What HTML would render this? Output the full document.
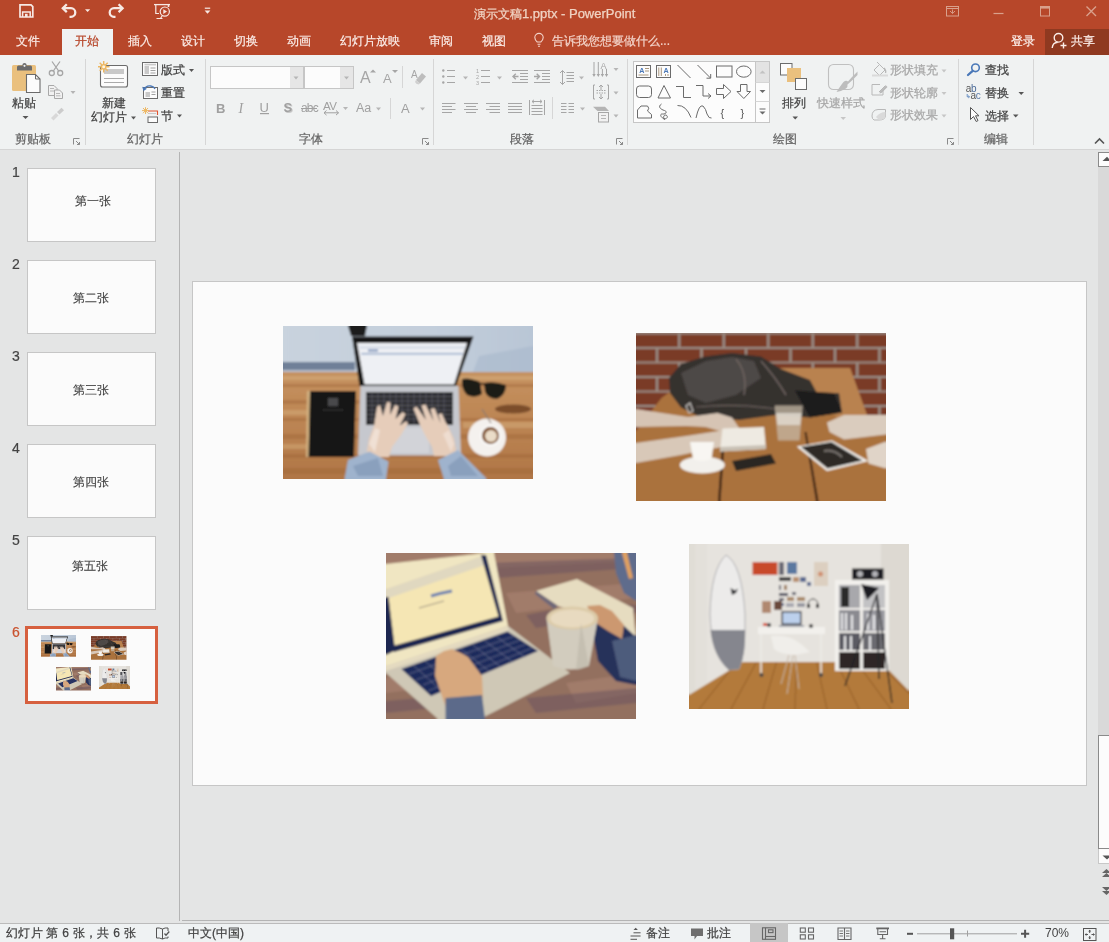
<!DOCTYPE html>
<html><head><meta charset="utf-8">
<style>
*{margin:0;padding:0;box-sizing:border-box}
html,body{width:1109px;height:942px;overflow:hidden}
body{position:relative;background:#E4E5E5;font-family:"Liberation Sans",sans-serif;font-size:12px;color:#444}
.a{position:absolute}
.t{position:absolute;white-space:nowrap;line-height:12px;font-size:12px;-webkit-text-stroke:0.25px currentColor}
.tab{-webkit-text-stroke:0.2px currentColor}
#title{left:0;top:0;width:1109px;height:55px;background:#B7472A}
.tab{color:#FBEDE8}
#ribbon{left:0;top:55px;width:1109px;height:94px;background:#F0F2F2}
#rbb{left:0;top:149px;width:1109px;height:1px;background:#D5D5D5}
.gl{color:#666}
.sep{position:absolute;width:1px;background:#D9D9D9}
.dd{position:absolute;width:0;height:0;border-left:3px solid transparent;border-right:3px solid transparent;border-top:3px solid #777}
.ddg{border-top-color:#B0B0B0}
.thumb{position:absolute;left:27px;width:129px;height:74px;background:#FBFBFB;border:1px solid #C6C6C6}
.tnum{position:absolute;left:12px;font-size:14px;line-height:14px;color:#444;-webkit-text-stroke:0.2px currentColor}
.ttx{position:absolute;left:0;width:127px;text-align:center;top:27px;font-size:12px;line-height:14px;color:#444;-webkit-text-stroke:0.15px currentColor}
#status{left:0;top:923px;width:1109px;height:19px;background:#EFF2F3;border-top:1px solid #BBBBBB}
</style></head><body style="will-change:transform">
<svg width="0" height="0" style="position:absolute">
<defs>
<filter id="soft" x="0" y="0" width="100%" height="100%"><feGaussianBlur stdDeviation="0.9"/><feComponentTransfer><feFuncA type="discrete" tableValues="1 1"/></feComponentTransfer></filter>
<filter id="soft2" x="-5%" y="-5%" width="110%" height="110%"><feGaussianBlur stdDeviation="1.6"/></filter>
<linearGradient id="wood1" x1="0" y1="0" x2="0" y2="1">
 <stop offset="0" stop-color="#CC9E6C"/><stop offset="0.5" stop-color="#C08A58"/><stop offset="1" stop-color="#B07646"/>
</linearGradient>
<linearGradient id="wall1" x1="0" y1="0" x2="1" y2="0">
 <stop offset="0" stop-color="#C9D3DE"/><stop offset="0.6" stop-color="#C3CEDB"/><stop offset="1" stop-color="#B9C6D6"/>
</linearGradient>

<symbol id="p1" viewBox="0 0 250 153">
<g filter="url(#soft)">
 <rect width="250" height="153" fill="url(#wood1)"/>
 <g opacity=".4" fill="#9C6236">
  <rect x="0" y="58" width="250" height="3"/><rect x="0" y="74" width="120" height="4"/>
  <rect x="0" y="92" width="250" height="3"/><rect x="0" y="108" width="250" height="5"/>
  <rect x="0" y="128" width="250" height="4"/><rect x="0" y="142" width="250" height="6"/>
 </g>
 <g opacity=".35" fill="#E2C08E">
  <rect x="0" y="50" width="250" height="4"/><rect x="0" y="84" width="60" height="5"/><rect x="180" y="96" width="70" height="6"/><rect x="0" y="118" width="40" height="5"/>
 </g>
 <rect width="250" height="46" fill="url(#wall1)"/>
 <rect x="0" y="36" width="72" height="10" fill="#6F8098"/>
 <rect x="0" y="44" width="72" height="2" fill="#B8C0CC"/>
 <path d="M196,30 L250,20 V46 H190 Z" fill="#ABBACD" opacity=".7"/>
 <!-- black object top -->
 <path d="M65,0 H84 L82,10 H68 Z" fill="#1C1C1E"/>
 <!-- dark shadow spot right -->
 <ellipse cx="230" cy="83" rx="18" ry="4.5" fill="#6A3E20" opacity=".8"/>
 <!-- notebook -->
 <path d="M26,65 H73 L71,131 H24 Z" fill="#121212"/>
 <path d="M24,65 H27 L25.5,131 H23 Z" fill="#D2B080"/>
 <path d="M45,72 H55 V80 H45 Z" fill="#4A4A4C"/>
 <path d="M40,84 H60" stroke="#555" stroke-width="0.8"/>
 <!-- laptop base -->
 <path d="M77.5,60 H175.5 L178,129.5 H75 Z" fill="#C6C8CE"/>
 <!-- keyboard -->
 <rect x="83" y="66" width="87" height="33" fill="#2A2A2E"/>
 <g stroke="#8A8A90" stroke-width="0.6" opacity=".8">
  <path d="M83,70.5 H170 M83,75 H170 M83,79.5 H170 M83,84 H170 M83,88.5 H170 M83,93 H170"/>
  <path d="M89,66 V99 M95,66 V99 M101,66 V99 M107,66 V99 M113,66 V99 M119,66 V99 M125,66 V99 M131,66 V99 M137,66 V99 M143,66 V99 M149,66 V99 M155,66 V99 M161,66 V99"/>
 </g>
 <rect x="108" y="102" width="38" height="25" fill="#D2D3D8"/>
 <!-- screen -->
 <path d="M69,10.5 H190.5 L173,60 H76.5 Z" fill="#161616"/>
 <path d="M74,17 H184 L171,58.5 H81.5 Z" fill="#EEF0F4"/>
 <path d="M76,20 H183 L182,23 H77 Z" fill="#DADFE8"/>
 <path d="M78,27 H180 L179.5,28.5 H78.5 Z" fill="#93A8C8"/>
 <rect x="85" y="23.5" width="10" height="2" fill="#7890B8"/>
 <!-- sunglasses -->
 <path d="M179,53 Q186,51 197,56 L199,68 Q192,73 184,69 Q178,63 179,53 Z" fill="#1F1A18"/>
 <path d="M201,57 Q212,55 223,59 Q223,69 214,73 Q205,73 202,66 Z" fill="#1F1A18"/>
 <path d="M197,58 Q199,57 202,58.5" stroke="#1F1A18" stroke-width="1.5" fill="none"/>
 <!-- hands -->
 <path d="M83,131 L86,113 L91,100 L94,81 L97,79 L100,90 L104,76 L107.5,76.5 L107,89 L112,79 L115.5,80.5 L112.5,93 L119.5,86 L122.5,88 L116.5,100 L123,95 L125,97.5 L118,109 L109,121 L106,131 Z" fill="#E6CDBA"/>
 <path d="M174,130 L171,113 L165,100 L162.5,96 L158.5,87 L155.5,88.5 L157.5,97 L151.5,82 L147.5,83 L150.5,95 L142.5,78.5 L138.5,79.5 L143,94 L133.5,80.5 L130.5,82.5 L137.5,100 L142,109 L149,121 L151,130 Z" fill="#E6CDBA"/>
 <path d="M86,118 L92,102 L97,104 L92,126 Z" fill="#F4E8E0" opacity=".7"/>
 <path d="M166,104 L171,118 L168,126 L160,108 Z" fill="#F4E8E0" opacity=".6"/>
 <!-- sleeves -->
 <path d="M61.5,153 L65,134 L86.5,125.5 L105.5,135.5 L103,153 Z" fill="#9FB3CD"/>
 <path d="M155,134 L175,124 L204,153 H161 Z" fill="#9FB3CD"/>
 <path d="M70,140 L95,132 L100,150 L75,150 Z" fill="#7D93B2" opacity=".6"/>
 <path d="M165,140 L178,130 L195,150 L168,150 Z" fill="#7D93B2" opacity=".6"/>
 <!-- saucer/cup -->
 <circle cx="204" cy="111.5" r="19" fill="#F4F1EE"/>
 <circle cx="207.5" cy="109.5" r="10.5" fill="#FBFBFA"/>
 <circle cx="207.5" cy="109.5" r="8.5" fill="#7E4E26"/>
 <circle cx="208" cy="110" r="6" fill="#EADCC8"/>
 <path d="M199,83 L208,97" stroke="#8A7A70" stroke-width="1.2"/>
</g>
</symbol>

<symbol id="p2" viewBox="0 0 250 168">
<g filter="url(#soft)">
 <rect width="250" height="168" fill="#A8703C"/>
 <rect width="250" height="100" fill="#9A8C84"/>
 <g fill="#7A3A26"><rect x="0.0" y="1.5" width="42.0" height="12.5"/><rect x="44.5" y="1.5" width="42.0" height="12.5"/><rect x="89.0" y="1.5" width="42.0" height="12.5"/><rect x="133.5" y="1.5" width="42.0" height="12.5"/><rect x="178.0" y="1.5" width="42.0" height="12.5"/><rect x="222.5" y="1.5" width="27.5" height="12.5"/><rect x="0.0" y="16.0" width="19.8" height="12.5"/><rect x="22.2" y="16.0" width="42.0" height="12.5"/><rect x="66.8" y="16.0" width="42.0" height="12.5"/><rect x="111.2" y="16.0" width="42.0" height="12.5"/><rect x="155.8" y="16.0" width="42.0" height="12.5"/><rect x="200.2" y="16.0" width="42.0" height="12.5"/><rect x="244.8" y="16.0" width="5.2" height="12.5"/><rect x="0.0" y="30.5" width="42.0" height="12.5"/><rect x="44.5" y="30.5" width="42.0" height="12.5"/><rect x="89.0" y="30.5" width="42.0" height="12.5"/><rect x="133.5" y="30.5" width="42.0" height="12.5"/><rect x="178.0" y="30.5" width="42.0" height="12.5"/><rect x="222.5" y="30.5" width="27.5" height="12.5"/><rect x="0.0" y="45.0" width="19.8" height="12.5"/><rect x="22.2" y="45.0" width="42.0" height="12.5"/><rect x="66.8" y="45.0" width="42.0" height="12.5"/><rect x="111.2" y="45.0" width="42.0" height="12.5"/><rect x="155.8" y="45.0" width="42.0" height="12.5"/><rect x="200.2" y="45.0" width="42.0" height="12.5"/><rect x="244.8" y="45.0" width="5.2" height="12.5"/><rect x="0.0" y="59.5" width="42.0" height="12.5"/><rect x="44.5" y="59.5" width="42.0" height="12.5"/><rect x="89.0" y="59.5" width="42.0" height="12.5"/><rect x="133.5" y="59.5" width="42.0" height="12.5"/><rect x="178.0" y="59.5" width="42.0" height="12.5"/><rect x="222.5" y="59.5" width="27.5" height="12.5"/><rect x="0.0" y="74.0" width="19.8" height="12.5"/><rect x="22.2" y="74.0" width="42.0" height="12.5"/><rect x="66.8" y="74.0" width="42.0" height="12.5"/><rect x="111.2" y="74.0" width="42.0" height="12.5"/><rect x="155.8" y="74.0" width="42.0" height="12.5"/><rect x="200.2" y="74.0" width="42.0" height="12.5"/><rect x="244.8" y="74.0" width="5.2" height="12.5"/><rect x="0.0" y="88.5" width="42.0" height="12.5"/><rect x="44.5" y="88.5" width="42.0" height="12.5"/><rect x="89.0" y="88.5" width="42.0" height="12.5"/><rect x="133.5" y="88.5" width="42.0" height="12.5"/><rect x="178.0" y="88.5" width="42.0" height="12.5"/><rect x="222.5" y="88.5" width="27.5" height="12.5"/></g>
 
 <!-- table -->
 <path d="M25.5,65 L60,40 L145,35 H214 L236,98 L250,100 V168 H0 V98 Z" fill="#AA723E"/>
 <path d="M145,35 H214 L234,90 L200,84 L180,58 Z" fill="#B98250"/>
 <path d="M85.5,118 L88,118 L84.5,168 H82 Z" fill="#3A2212"/>
 <path d="M168.5,99 L170.5,99 L182.5,168 H180 Z" fill="#3A2212"/>
 <!-- bag -->
 <path d="M33,45 L45,31 L69,23.5 L96,20 L125,23.5 L145,36 L174,47 L181,60 L203,60 L206,79.5 L174,84.5 L140,82 L103,87 L62,83 L45,74.5 L34,60 Z" fill="#35302E"/>
 <path d="M45,40 L70,28 L96,24 L118,28 L125,45 L100,62 L70,70 L52,62 Z" fill="#4E4846"/>
 <path d="M100,26 Q112,40 108,62 M125,28 Q140,45 150,62" stroke="#6E6460" stroke-width="1.5" fill="none"/>
 <path d="M60,74 Q100,70 140,76" stroke="#6A605C" stroke-width="1.2" fill="none"/>
 <path d="M159,57.5 L198,60 L206,79.5 L174,84.5 Z" fill="#1C1A1A"/>
 <path d="M54,70 L57,78 L53,80 L50,73 Z" fill="none" stroke="#C8C4C0" stroke-width="1.2"/>
 <!-- left arms -->
 <path d="M0,76 L52,84 L81.5,80 L96,84.5 L103.5,95.5 L91,100 L69.5,94 L50,93 L0,94 Z" fill="#D6C4B4"/>
 <path d="M0,110 L50,103 L89,97 L94,108.5 L89,113.5 L69.5,117 L45,122 L0,130 Z" fill="#D8C8B8"/>
 <!-- notebook -->
 <path d="M86.5,95.5 L128,94 L130,116 L84,118.5 Z" fill="#EEEAE2"/>
 <path d="M84,114 L130,112 L130,116 L84,118.5 Z" fill="#C8C0B4"/>
 <!-- cup & saucer -->
 <ellipse cx="66.3" cy="132" rx="22.5" ry="8.5" fill="#F2F0EC"/>
 <path d="M54,109 H78 L75.5,126 Q66,130 57,126 Z" fill="#F8F6F2"/>
 <!-- phone -->
 <path d="M96,128 L135,121 L140,130.5 L100,138 Z" fill="#2A2624"/>
 <!-- glass -->
 <path d="M138.7,72.5 H166.7 L163.5,107.5 H142 Z" fill="#C6B8A6" opacity=".75"/>
 <path d="M140,80 H165.5 L164,92 H141.5 Z" fill="#E2DCD2" opacity=".8"/>
 <!-- tablet -->
 <path d="M160.7,113.6 L196,107.5 L232.5,128 L191,138 Z" fill="#F2F0EC"/>
 <path d="M165,114 L195.5,109 L226.5,127.5 L191.5,135.5 Z" fill="#2E2A28"/>
 <path d="M188,118 Q198,116 206,124" stroke="#7A7470" stroke-width="2" fill="none"/>
 <!-- right hands -->
 <path d="M191,89.5 L208,82 L250,82 V101.5 L208,106.5 L193.5,99 Z" fill="#DACCBE"/>
 <path d="M230,116 L250,108.5 V135.5 L232.5,130.5 Z" fill="#E0D4C8"/>
</g>
</symbol>

<symbol id="p3" viewBox="0 0 250 166">
<g filter="url(#soft)">
 <rect width="250" height="166" fill="#93705E"/>
 <g fill="#A88070" opacity=".7">
  <path d="M0,0 H250 V8 L0,20 Z"/><path d="M120,40 L250,30 V45 L130,60 Z"/><path d="M0,125 L60,120 L40,135 L0,140 Z"/><path d="M180,130 L250,120 V140 L190,150 Z"/>
 </g>
 <g fill="#6E5660" opacity=".55">
  <path d="M100,10 L250,5 V15 L110,25 Z"/><path d="M140,62 L200,50 L250,52 V60 L150,75 Z"/><path d="M0,148 L90,140 L80,152 L0,160 Z"/><path d="M140,145 L250,135 V150 L150,160 Z"/>
 </g>
 <!-- pencils top right -->
 <path d="M228,0 H250 V48 L238,40 L230,20 Z" fill="#5E6C8C"/>
 <path d="M236,0 H241 L247,25 L243,26 Z" fill="#E0A060"/>
 <!-- notebook -->
 <path d="M150,38 L191,26 L247,55 L250,88 L220,67 L172,53 Z" fill="#E6DCC0"/>
 <path d="M150,38 L172,53 L168,56 L149,41 Z" fill="#6E6878"/>
  <!-- right hand/sleeve -->
 <path d="M204,66 L222,58 L250,84 V132 L230,128 L212,108 Z" fill="#27305A"/>
 <path d="M226,88 L250,82 V128 L234,124 Z" fill="#4E5C7C"/>
 <path d="M201,53 L214,52 L226,58 L238,72 L236,86 L222,78 L210,70 Z" fill="#CC9870"/>
<!-- laptop lid -->
 <path d="M0,11 L100,0 H108 L122,73 L0,114 Z" fill="#F0E6C2"/>
 <path d="M0,36 L96,3 L113,65 L7,95 Z" fill="#F5E6B4"/>
 <path d="M0,36 L96,3 L99,12 L0,46 Z" fill="#E0D8C0"/>
 <path d="M95,2 L100,2 L117,68 L8,99 L5,93.5 L112.5,63.5 Z" fill="#1E2650"/>
 <path d="M0,44 L2.5,44 L9,96 L8,98 L0,102 Z" fill="#1E2650"/>
 <path d="M45,43 Q55,40 66,38" stroke="#6A80B0" stroke-width="3" fill="none"/>
 <path d="M33,55 L58,48" stroke="#9A9080" stroke-width="1" fill="none"/>
 <!-- base -->
 <path d="M0,113 L122,73 L184,120 L94,166 H52 L0,120 Z" fill="#CFC8B6"/>
 <path d="M0,113 L122,73 L123,77 L0,118 Z" fill="#E4DAC0"/>
 <!-- keyboard -->
 <path d="M15.5,116 L121.5,78.5 L152,98 L45,143 Z" fill="#1E2A5C"/>
 <g stroke="#A4A8B8" stroke-width="0.6" opacity=".7">
  <path d="M23,121 L128,83 M30,127 L134,87 M37,132 L140,91 M42,138 L146,95"/>
  <path d="M27,112 L57,139 M39,108 L69,134 M51,104 L81,129 M63,100 L93,124 M75,96 L104,119 M87,92 L116,115 M99,88 L128,110 M111,84 L140,105"/>
 </g>
 <!-- cup -->
 <path d="M160.5,65 H212 L203,113 Q185,120 167,113 Z" fill="#D2CCBE"/>
 <ellipse cx="186.2" cy="65" rx="25.7" ry="11.5" fill="#DCCBA8"/>
 <ellipse cx="186.2" cy="65.5" rx="22" ry="9" fill="#E8DAC0"/>
 <path d="M195,70 L203,113 Q196,116 190,117 Z" fill="#BDB5A8" opacity=".6"/>
 <!-- hand -->
 <path d="M50,103 L58,98 L66,96 L75,100 L82,104 L96,123 L97,145 L60,155 L49,123 Z" fill="#D7A87E"/>
 <path d="M59.5,145 L96,142 L99,166 H59.5 Z" fill="#5B6B8A"/>
</g>
</symbol>

<symbol id="p4" viewBox="0 0 220 165">
<g filter="url(#soft)">
 <rect width="220" height="165" fill="#E6E3DE"/>
 <path d="M192,0 H220 V150 L192,122 Z" fill="#DDD9D2"/>
 <rect x="0" y="0" width="6" height="150" fill="#D8D4CC"/>
 <path d="M0,0 H18 V140 L0,152 Z" fill="#E2DFD8" opacity=".8"/>
 <!-- floor -->
 <path d="M0,151 L54,118 H192 L220,147 V165 H0 Z" fill="#B37A3A"/>
 <clipPath id="floorclip"><path d="M0,151 L54,118 H192 L220,147 V165 H0 Z"/></clipPath><g stroke="#8A5526" stroke-width="1.1" opacity=".65" clip-path="url(#floorclip)"><path d="M-60.0,165 L3.9,118 M-25.0,165 L25.8,118 M10.0,165 L47.6,118 M42.0,165 L67.6,118 M74.0,165 L87.5,118 M106.0,165 L107.5,118 M138.0,165 L127.5,118 M170.0,165 L147.4,118 M202.0,165 L167.4,118 M236.0,165 L188.6,118 M270.0,165 L209.8,118"/></g>
 <!-- surfboard -->
 <path d="M37,11 Q53,20 56,70 Q57,110 50,125 L40,126 Q22,110 21,70 Q22,25 37,11 Z" fill="#ECEBEA" stroke="#A8A8AC" stroke-width="0.9"/>
 <path d="M21.5,86 H56 Q57,110 50,125 L40,126 Q24,112 21.5,86 Z" fill="#85868E"/>
 <path d="M41.5,44 L46,46.5 L49,44.5 L47,49 L43,51 Z" fill="#2A2A2E"/>
 <!-- posters -->
 <rect x="63.5" y="18" width="25" height="13" fill="#C84A2A"/>
 <g fill="#6B6B74">
  <rect x="90" y="18" width="5" height="13"/><rect x="98" y="18" width="10" height="12" fill="#5A78A0"/>
  <rect x="90" y="33" width="12" height="4" fill="#3A3A3A"/><rect x="104" y="33" width="6" height="5" fill="#B89070"/>
  <rect x="90" y="41" width="2" height="5"/><rect x="95" y="41" width="3" height="5" fill="#A08060"/>
  <rect x="90" y="49" width="9" height="3" fill="#505060"/><rect x="103" y="48" width="4" height="3"/>
  <rect x="90" y="54" width="5" height="3"/><rect x="98" y="53" width="7" height="4" fill="#A88868"/><rect x="108" y="53" width="8" height="4" fill="#A88868"/>
  <rect x="92" y="59" width="3" height="3" fill="#5A6A90"/><rect x="97" y="59" width="8" height="4" fill="#A8A8B0"/><rect x="108" y="59" width="8" height="4" fill="#9898A0"/>
  <rect x="73" y="57" width="9" height="12" fill="#B08870"/><rect x="85" y="57" width="8" height="9" fill="#6A4A3A"/>
  <rect x="111" y="33" width="6" height="5" fill="#5A6A90"/><rect x="125" y="18" width="14" height="24" fill="#DCCFC0"/>
  <circle cx="131.5" cy="30" r="2.5" fill="#D09070"/>
  <rect x="118" y="38" width="4" height="4" fill="#5A6A90"/>
 </g>
 <!-- headphones -->
 <path d="M119,62 Q119,55 124,55 Q129,55 129,62" fill="none" stroke="#333" stroke-width="1"/>
 <rect x="118" y="60" width="3" height="4" fill="#222"/><rect x="127" y="60" width="3" height="4" fill="#222"/>
 <!-- desk -->
 <rect x="69" y="83" width="67" height="7" fill="#F2F0EC"/>
 <path d="M72,90 V129 M132,90 V130" stroke="#ECEAE6" stroke-width="1.6"/>
 <circle cx="72.5" cy="131" r="2" fill="#4A4A4A"/><circle cx="132" cy="131" r="2" fill="#4A4A4A"/>
 <!-- laptop -->
 <rect x="92.5" y="67" width="20" height="14" fill="#3A3A40"/>
 <rect x="94" y="68.5" width="17" height="11" fill="#BCD0EC"/>
 <rect x="90" y="81" width="25" height="2" fill="#9CA0A8"/>
 <circle cx="80" cy="81" r="2" fill="#333"/><rect x="74" y="79" width="4" height="3" fill="#D85030"/>
 <circle cx="122" cy="82" r="2" fill="#333"/>
 <!-- chair -->
 <path d="M82,92 Q100,90 112,100 L121,108 L106,111 Q90,110 85,105 Z" fill="#F0EEEA"/>
 <path d="M100,111 L92,140 M106,111 L110,145 M104,111 L98,150" stroke="#C8B8A8" stroke-width="1"/>
 <!-- shelf -->
 <rect x="146" y="36" width="54" height="91" fill="#F2F0EC"/>
 <rect x="150" y="41" width="21" height="23" fill="#A8A8AC"/>
 <rect x="174" y="41" width="22" height="23" fill="#C2C2C4"/>
 <rect x="150" y="66" width="21" height="21" fill="#8A8A90"/>
 <rect x="174" y="66" width="22" height="21" fill="#9A9AA0"/>
 <rect x="150" y="89" width="21" height="17" fill="#5A5A62"/>
 <rect x="174" y="89" width="22" height="17" fill="#6A6A70"/>
 <rect x="150" y="108" width="21" height="17" fill="#2E2826"/>
 <rect x="174" y="108" width="22" height="17" fill="#2E2826"/>
 <rect x="152" y="43" width="8" height="20" fill="#2A2A2C"/>
 <g fill="#E8E8EA"><rect x="152" y="69" width="2" height="17"/><rect x="156" y="69" width="2" height="17"/><rect x="162" y="71" width="2" height="15"/><rect x="178" y="70" width="2" height="16"/><rect x="184" y="71" width="2" height="15"/><rect x="155" y="92" width="2" height="14"/><rect x="161" y="92" width="2" height="14"/><rect x="180" y="92" width="2" height="14"/></g>
 <!-- speaker -->
 <rect x="163" y="24.5" width="31.5" height="11" fill="#1E1E20"/>
 <circle cx="171" cy="30" r="3" fill="#B4B4B8"/><circle cx="186" cy="30" r="3" fill="#B4B4B8"/>
 <!-- lamp + tripod -->
 <path d="M172,40 L190,44 L178,56 Z" fill="#1E1E22"/>
 <path d="M188,50 L156,142 M188,50 L203,159 M188,50 L190,135" stroke="#222226" stroke-width="1.3"/>
</g>
</symbol>
</defs>
</svg>

<div id="title" class="a"></div>
<!-- active tab -->
<div class="a" style="left:62px;top:29px;width:51px;height:26px;background:#F0F2F2"></div>
<div id="ribbon" class="a"></div>
<div id="rbb" class="a"></div>

<!-- tabs text -->
<div class="t tab" style="left:16px;top:35px">文件</div>
<div class="t" style="left:75px;top:35px;color:#B7472A">开始</div>
<div class="t tab" style="left:128px;top:35px">插入</div>
<div class="t tab" style="left:181px;top:35px">设计</div>
<div class="t tab" style="left:234px;top:35px">切换</div>
<div class="t tab" style="left:287px;top:35px">动画</div>
<div class="t tab" style="left:340px;top:35px">幻灯片放映</div>
<div class="t tab" style="left:429px;top:35px">审阅</div>
<div class="t tab" style="left:482px;top:35px">视图</div>
<div class="t tab" style="left:552px;top:35px;color:#F3D3C9">告诉我您想要做什么...</div>
<div class="t tab" style="left:1011px;top:35px">登录</div>
<div class="a" style="left:1045px;top:29px;width:64px;height:26px;background:#8F3920"></div>
<div class="t tab" style="left:1071px;top:35px">共享</div>
<div class="t" style="left:474px;top:8px;color:#F0D3C3">演示文稿<span style="font-size:13px">1.pptx - PowerPoint</span></div>
<svg class="a" style="left:0;top:0" width="1109" height="160">
<g fill="none" stroke="#F7E9E4" stroke-width="1.6">
 <!-- save -->
 <path d="M20,4.8 H31 L32.8,6.6 V17 H20 Z" stroke-width="1.7"/>
 <path d="M22.6,17 V12 H30.2 V17" stroke-width="1.5"/>
 <rect x="25" y="13.8" width="2.6" height="3.2" fill="#F7E9E4" stroke="none"/>
 <!-- undo -->
 <path d="M63,8.2 H71 A4.3,4.3 0 0 1 71,16.8 H69.5" stroke-width="2.3"/>
 <path d="M66.8,4.3 L62.8,8.2 L66.8,12.1" stroke-width="2.3"/>
 <!-- redo -->
 <path d="M122.5,8.2 H114 A4.3,4.3 0 0 0 114,16.8 H115.5" stroke-width="2.3"/>
 <path d="M118.6,4.3 L122.6,8.2 L118.6,12.1" stroke-width="2.3"/>
 <!-- presentation -->
 <path d="M154,4.6 H170" stroke-width="1.3"/>
 <path d="M155.8,4.6 V13.5 H159" stroke-width="1.2"/>
 <circle cx="164.8" cy="11.6" r="4.6" stroke-width="1.2"/>
 <path d="M156.5,18.5 H162.5 M162,16 L160.5,18.5" stroke-width="1.2"/>
 <path d="M168.5,4.6 V7"/>
</g>
<path d="M163.3,9.2 L167,11.6 L163.3,14 Z" fill="#F7E9E4"/>
<path d="M85,9.2 H90.2 L87.6,12 Z" fill="#F7E9E4"/>
<path d="M204.8,8.2 H210.2" stroke="#F7E9E4" stroke-width="1.2"/>
<path d="M204.6,10.4 H210.4 L207.5,13.8 Z" fill="#F7E9E4"/>
<!-- window controls -->
<g fill="none" stroke="#D9A08C" stroke-width="1">
 <rect x="946.5" y="6.5" width="12" height="9.5"/>
 <path d="M946.5,8.5 H958.5"/>
 <path d="M950,11 L952.5,13.5 L955,11 M952.5,13.5 V9.5" stroke-width="0.9"/>
 <path d="M993.5,13.5 H1003.5" stroke-width="1.2"/>
 <rect x="1040.5" y="6.5" width="9" height="9.5"/>
 <path d="M1040.5,7.8 H1049.5" stroke-width="1.6"/>
 <path d="M1086.5,6.5 L1096,16 M1096,6.5 L1086.5,16" stroke-width="1.4"/>
</g>
<!-- bulb -->
<g fill="none" stroke="#F3D3C9" stroke-width="1.1">
 <path d="M537.2,42 C535.5,40.5 534.8,39 534.8,37.6 A4.2,4.2 0 0 1 543.2,37.6 C543.2,39 542.5,40.5 540.8,42 Z"/>
 <path d="M537.5,44.3 H540.5 M538,46.3 H540"/>
</g>
<!-- share person -->
<g fill="none" stroke="#FBEDE8" stroke-width="1.4">
 <circle cx="1058.5" cy="37.8" r="4.3"/>
 <path d="M1052.2,48 C1052.5,44.5 1054.8,42.3 1057.8,42.2"/>
 <path d="M1063.5,42.5 V48.5 M1060.5,45.5 H1066.5"/>
</g>

<!-- ===== RIBBON ===== -->
<!-- separators -->
<g fill="#D6D6D6">
 <rect x="85" y="59" width="1" height="86"/>
 <rect x="205" y="59" width="1" height="86"/>
 <rect x="433" y="59" width="1" height="86"/>
 <rect x="627" y="59" width="1" height="86"/>
 <rect x="958" y="59" width="1" height="86"/>
 <rect x="1033" y="59" width="1" height="86"/>
 <rect x="402" y="66" width="1" height="22"/>
 <rect x="390" y="98" width="1" height="21"/>
 <rect x="552" y="97" width="1" height="22"/>
</g>
<!-- dialog launchers -->
<g fill="none" stroke="#8A8A8A" stroke-width="1">
 <path d="M73.5,144.5 V138.5 H79.5"/><path d="M76,141 L79.5,144.5 M77,144.5 H79.5 V142"/>
 <path d="M422.5,144.5 V138.5 H428.5"/><path d="M425,141 L428.5,144.5 M426,144.5 H428.5 V142"/>
 <path d="M616.5,144.5 V138.5 H622.5"/><path d="M619,141 L622.5,144.5 M620,144.5 H622.5 V142"/>
 <path d="M947.5,144.5 V138.5 H953.5"/><path d="M950,141 L953.5,144.5 M951,144.5 H953.5 V142"/>
</g>
<!-- collapse -->
<path d="M1095,143.5 L1099.5,139 L1104,143.5" fill="none" stroke="#555" stroke-width="1.6"/>

<!-- paste -->
<rect x="12" y="65" width="24" height="26" rx="1.5" fill="#EAC07E"/>
<path d="M17,70.5 V67 Q17,65.5 18.5,65.5 H22.5 V64.5 Q22.5,63 24.5,63 Q26.5,63 26.5,64.5 V65.5 H30.5 Q32,65.5 32,67 V70.5 Z" fill="#6B6B6B"/>
<circle cx="24.5" cy="65.8" r="1.1" fill="#F1F1F1"/>
<path d="M26.5,74.5 H35.5 L40,79 V92.5 H26.5 Z" fill="#FCFCFC" stroke="#6B6B6B" stroke-width="1.1"/>
<path d="M35.5,74.5 V79 H40" fill="none" stroke="#6B6B6B" stroke-width="1"/>
<path d="M22.5,116 H28.5 L25.5,119 Z" fill="#555"/>
<!-- scissors -->
<g fill="none" stroke="#A6A6A6" stroke-width="1.3">
 <circle cx="51.8" cy="73" r="2.5"/><circle cx="60.2" cy="73" r="2.5"/>
 <path d="M53.3,71 L60,61.5 M58.7,71 L52,61.5"/>
</g>
<!-- copy -->
<g fill="#F1F1F1" stroke="#A8A8A8" stroke-width="1">
 <path d="M48.5,85.5 H54 L57,88.5 V95.5 H48.5 Z"/>
 <path d="M54.5,90 H59.5 L62.5,93 V98.5 H54.5 Z"/>
 <path d="M50,88.5 H54 M50,91 H54 M56,93.5 H60 M56,95.8 H60.5" stroke-width="0.8"/>
</g>
<path d="M70.5,91 H75.5 L73,94 Z" fill="#B4B4B4"/>
<!-- painter -->
<g fill="#CCCCCC">
 <path d="M57,112 L61.5,107.7 L64,110.2 L59.5,114.5 Z"/>
 <path d="M51,118 L56,113 L58.5,115.5 L53.5,120.5 Z" fill="#D8D8D8"/>
</g>

<!-- new slide -->
<rect x="100.5" y="65.5" width="27" height="21.5" rx="2" fill="#FCFCFC" stroke="#6B6B6B" stroke-width="1.1"/>
<rect x="104" y="69" width="20" height="5" fill="#C9C9C9"/>
<path d="M104,78.5 H124 M104,82.5 H124" stroke="#A0A0A0" stroke-width="0.9"/>
<g stroke="#EDB863" stroke-width="1.5">
 <path d="M103.7,61 V72.5 M98,66.8 H109.5 M99.7,62.8 L107.7,70.8 M107.7,62.8 L99.7,70.8"/>
</g>
<circle cx="103.7" cy="66.8" r="2.8" fill="#EDB863"/>
<circle cx="103.7" cy="66.8" r="1.5" fill="#FFF6E0"/>
<path d="M131,116.5 H136 L133.5,119.5 Z" fill="#555"/>
<!-- layout -->
<rect x="142.5" y="62.5" width="15" height="13" fill="#FCFCFC" stroke="#6B6B6B" stroke-width="1"/>
<rect x="144.5" y="66" width="4.5" height="8" fill="#C9C9C9"/>
<rect x="144.5" y="63.8" width="11.5" height="1.6" fill="#C9C9C9"/>
<path d="M150.5,68 H155.5 M150.5,70.5 H155.5 M150.5,73 H155.5" stroke="#8A8A8A" stroke-width="0.8"/>
<path d="M189,69 H194 L191.5,72 Z" fill="#555"/>
<!-- reset -->
<rect x="143.5" y="87.5" width="14" height="11" fill="#FCFCFC" stroke="#6B6B6B" stroke-width="1"/>
<rect x="145.5" y="92" width="4.5" height="5" fill="#C9C9C9"/>
<path d="M151.5,92 H155.5 M151.5,94.5 H155.5" stroke="#8A8A8A" stroke-width="0.8"/>
<path d="M143.5,90 Q146,85 151,86 Q154,86.5 155,89" fill="none" stroke="#4A78B8" stroke-width="1.3"/>
<path d="M142.2,86.8 L143.5,91 L147,88.8 Z" fill="#4A78B8"/>
<!-- section -->
<rect x="148" y="117" width="9.5" height="5.5" fill="#FCFCFC" stroke="#6B6B6B" stroke-width="1"/>
<path d="M148,111 H157.5 V115" fill="none" stroke="#E0522E" stroke-width="1.1"/>
<path d="M148,113.5 H156" stroke="#C9C9C9" stroke-width="1"/>
<g stroke="#EDB863" stroke-width="1">
 <path d="M145.5,107.2 V114 M142,110.6 H149 M143,108 L148,113.2 M148,108 L143,113.2"/>
</g>
<circle cx="145.5" cy="110.6" r="1.6" fill="#EDB863"/>
<path d="M177,114.5 H182 L179.5,117.5 Z" fill="#555"/>

<!-- font boxes -->
<rect x="210.5" y="66.5" width="93" height="22" fill="#FCFCFC" stroke="#C6C6C6"/>
<rect x="290" y="67" width="13" height="21" fill="#E6E6E6"/>
<path d="M293.5,76.5 H298.5 L296,79.5 Z" fill="#B6B6B6"/>
<rect x="304.5" y="66.5" width="49" height="22" fill="#FCFCFC" stroke="#C6C6C6"/>
<rect x="340" y="67" width="13" height="21" fill="#E6E6E6"/>
<path d="M344,76.5 H349 L346.5,79.5 Z" fill="#B6B6B6"/>
<g fill="#A6A6A6" font-family="Liberation Sans" >
 <text x="360" y="83" font-size="16">A</text>
 <path d="M370,72.5 L373,69.5 L376,72.5 Z"/>
 <text x="383" y="83" font-size="13">A</text>
 <path d="M392,70 H398 L395,73 Z"/>
</g>
<!-- clear formatting -->
<text x="411" y="78" font-size="10" fill="#A6A6A6" font-family="Liberation Sans">A</text>
<path d="M416,80 L422,73 L426,76.5 L420,83.5 Z" fill="#BDBDBD"/>
<path d="M416,80 L420,83.5 L418.5,84.5 Q416,84 415,82 Z" fill="#D0D0D0"/>
<!-- BIUS -->
<g fill="#A0A0A0" font-family="Liberation Sans" font-size="13">
 <text x="216" y="112.5" font-weight="bold">B</text>
 <text x="238.5" y="112.5" font-style="italic" font-family="Liberation Serif" font-size="14">I</text>
 <text x="259.5" y="112" >U</text>
 <rect x="260" y="113" width="9" height="1.2"/>
 <text x="284.5" y="113" font-weight="bold" fill="#C8C8C8">S</text>
 <text x="283.5" y="112" font-weight="bold">S</text>
 <text x="301" y="112" font-size="12" letter-spacing="-0.8">abc</text>
 <rect x="301" y="108" width="16" height="1"/>
 <text x="323" y="110" font-size="11.5" letter-spacing="-0.5">AV</text>
 <path d="M324,112.8 H338.5 M326.5,110.5 L324,112.8 L326.5,115.1 M336,110.5 L338.5,112.8 L336,115.1" fill="none" stroke="#A0A0A0" stroke-width="1"/>
 <text x="356" y="112" font-size="12.5">Aa</text>
 <text x="401" y="112.5" font-size="13">A</text>
</g>
<g fill="#B6B6B6">
 <path d="M343,107 H348 L345.5,110 Z"/>
 <path d="M376,107.5 H381 L378.5,110.5 Z"/>
 <path d="M420,107.5 H425 L422.5,110.5 Z"/>
</g>

<!-- paragraph icons -->
<g stroke="#A6A6A6" stroke-width="1" fill="none">
 <!-- bullets -->
 <path d="M447,70.5 H455 M447,76.5 H455 M447,82.5 H455"/>
 <!-- numbering -->
 <path d="M481,70.5 H490 M481,76.5 H490 M481,82.5 H490"/>
 <!-- decrease indent -->
 <path d="M512,70.5 H528 M520,73.5 H528 M520,76.5 H528 M520,79.5 H528 M512,82.5 H528"/>
 <path d="M518.5,76.5 H513 M515.8,73.8 L513,76.5 L515.8,79.2" stroke-width="1.4"/>
 <!-- increase indent -->
 <path d="M534,70.5 H550 M542,73.5 H550 M542,76.5 H550 M542,79.5 H550 M534,82.5 H550"/>
 <path d="M534,76.5 H539.5 M536.7,73.8 L539.5,76.5 L536.7,79.2" stroke-width="1.4"/>
 <!-- line spacing -->
 <path d="M562.5,70.5 V84.5 M560,73 L562.5,70.5 L565,73 M560,82 L562.5,84.5 L565,82"/>
 <path d="M566.5,72.5 H574 M566.5,75.5 H574 M566.5,78.5 H574 M566.5,81.5 H574"/>
 <!-- align -->
 <path d="M442,103.5 H455.5 M442,106.5 H452 M442,109.5 H455.5 M442,112.5 H452"/>
 <path d="M464,103.5 H478 M466,106.5 H476 M464,109.5 H478 M466,112.5 H476"/>
 <path d="M486,103.5 H500 M489.5,106.5 H500 M486,109.5 H500 M489.5,112.5 H500"/>
 <path d="M508,103.5 H522 M508,106.5 H522 M508,109.5 H522 M508,112.5 H522"/>
 <!-- distributed -->
 <path d="M529.5,100 V115 M544.5,100 V115"/>
 <path d="M531.5,105.5 H542.5 M531.5,108.5 H542.5 M531.5,111.5 H542.5 M531.5,114.5 H542.5"/>
 <path d="M532,101.5 H542 M534,99.8 L532,101.5 L534,103.2 M540,99.8 L542,101.5 L540,103.2"/>
 <!-- columns -->
 <path d="M561,103.5 H566.5 M561,106.5 H566.5 M561,109.5 H566.5 M561,112.5 H566.5 M568.5,103.5 H574 M568.5,106.5 H574 M568.5,109.5 H574 M568.5,112.5 H574"/>
 <!-- text direction -->
 <path d="M594,62 V75 M598.3,62 V75 M602.4,69 V75 M606.5,69 V75"/>
 <!-- align text -->
 <path d="M595,85 H593.5 V99 H595 M607,85 H608.5 V99 H607"/>
 <path d="M596.5,90.5 H605.5 M596.5,93 H605.5" stroke-dasharray="1.5,1"/>
 <path d="M601,85 V90 M599,87 L601,85 L603,87 M601,94 V99 M599,97 L601,99 L603,97" stroke="#A6A6A6"/>
 <!-- smartart -->
 <rect x="598.5" y="112.5" width="10" height="9.5" fill="#F1F1F1"/>
 <path d="M601,115.5 H606 M601,118.5 H606" stroke-width="0.8"/>
</g>
<g fill="#A6A6A6">
 <circle cx="443.3" cy="70.5" r="1.2"/><circle cx="443.3" cy="76.5" r="1.2"/><circle cx="443.3" cy="82.5" r="1.2"/>
 <text x="476" y="72.5" font-size="5.5" font-family="Liberation Sans">1</text>
 <text x="476" y="78.5" font-size="5.5" font-family="Liberation Sans">2</text>
 <text x="476" y="84.5" font-size="5.5" font-family="Liberation Sans">3</text>
 <text x="600.5" y="68.5" font-size="9" font-family="Liberation Sans">A</text>
 <path d="M592.3,74 L594,77 L595.7,74 Z M596.6,74 L598.3,77 L600,74 Z M600.7,74 L602.4,77 L604.1,74 Z M604.8,74 L606.5,77 L608.2,74 Z"/>
 <path d="M593,106.8 H605 L609,111 H597.5 Z" fill="#B4B4B4"/>
</g>
<g fill="#B6B6B6">
 <path d="M463,76.5 H468 L465.5,79.5 Z"/>
 <path d="M497,76.5 H502 L499.5,79.5 Z"/>
 <path d="M579,76.5 H584 L581.5,79.5 Z"/>
 <path d="M613.5,68 H618.5 L616,71 Z"/>
 <path d="M613.5,91.5 H618.5 L616,94.5 Z"/>
 <path d="M613.5,114.5 H618.5 L616,117.5 Z"/>
 <path d="M580,107.5 H585 L582.5,110.5 Z"/>
</g>

<!-- shapes gallery -->
<rect x="633.5" y="61.5" width="136" height="61" fill="#FCFCFC" stroke="#C6C6C6"/>
<rect x="755.5" y="61.5" width="14" height="61" fill="#FCFCFC" stroke="#C6C6C6"/>
<rect x="756" y="62" width="13" height="20" fill="#E3E3E3"/>
<path d="M755.5,82.5 H769.5 M755.5,101.5 H769.5" stroke="#D6D6D6"/>
<path d="M759.5,73.5 H765.5 L762.5,70.5 Z" fill="#C2C2C2"/>
<path d="M759.5,90 H765.5 L762.5,93 Z" fill="#6B6B6B"/>
<path d="M759.5,109 H765.5" stroke="#6B6B6B" stroke-width="1"/>
<path d="M759.5,111.5 H765.5 L762.5,114.5 Z" fill="#6B6B6B"/>
<g fill="none" stroke="#6B6B6B" stroke-width="1">
 <!-- row1 -->
 <rect x="636.5" y="65.5" width="14" height="12"/>
 <path d="M645,68.5 H649 M645,71 H649 M638.5,75 H648.5" stroke="#A08C70" stroke-width="0.9"/>
 <rect x="656.5" y="65.5" width="14" height="12"/>
 <path d="M658.8,67.5 V76 M661.3,67.5 V76 M665.5,74 V76 M668,74 V76" stroke="#A08C70" stroke-width="0.9"/>
 <path d="M677.5,65 L690.5,78"/>
 <path d="M697.5,65 L710.5,78 M706.5,78.2 H710.7 V74"/>
 <rect x="716.5" y="66" width="15.5" height="11"/>
 <ellipse cx="743.8" cy="71.6" rx="7.3" ry="5.6"/>
 <!-- row2 -->
 <rect x="636.5" y="86" width="15" height="11.5" rx="3"/>
 <path d="M658,98 L664,85.5 L670.5,98 Z"/>
 <path d="M676,86.5 H683.5 V97.5 H691"/>
 <path d="M696,85.5 H703 V96 H711 M708,93.5 L711,96 L708,98.5"/>
 <path d="M716.5,88.5 H723.5 V84.5 L731,91.5 L723.5,98.5 V94.5 H716.5 Z"/>
 <path d="M740.5,84.5 H747 V91.5 H750.5 L743.8,98.5 L737,91.5 H740.5 Z"/>
 <!-- row3 -->
 <path d="M637.5,110 L641,106 H647.5 Q650,108 647.5,111 L651.5,114.5 V118 H637.5 Z"/>
 <path d="M661.5,104 C657.5,106.5 660.5,109.5 664.5,110.5 C668,111.8 665.5,114.5 662.5,114 C659.5,113.6 660.5,117.5 663.8,118.6 C667,119.6 668.6,116.2 666.2,115.2 C663.6,114.2 662.8,117.8 664.6,120"/>
 <path d="M677.5,105.5 Q686,105 691,117.5"/>
 <path d="M696,118 Q699,104 703,106 Q706,109 707,114 Q709,119 711.5,118"/>
 <text x="720.5" y="117" font-size="11" fill="#555" stroke="none" font-family="Liberation Sans">{</text>
 <text x="740.5" y="117" font-size="11" fill="#555" stroke="none" font-family="Liberation Sans">}</text>
</g>
<text x="639.2" y="72.5" font-size="7.2" font-weight="bold" fill="#4A78B8" font-family="Liberation Sans">A</text><text x="663.6" y="72.5" font-size="7.2" font-weight="bold" fill="#4A78B8" font-family="Liberation Sans">A</text>

<!-- arrange -->
<rect x="780.5" y="63.5" width="11.5" height="11.5" fill="#FCFCFC" stroke="#6B6B6B"/>
<rect x="787" y="68" width="14" height="14" fill="#EAC07E"/>
<rect x="795.5" y="78.5" width="11" height="11" fill="#FCFCFC" stroke="#6B6B6B"/>
<rect x="787" y="75" width="5" height="7" fill="#EAC07E"/>
<path d="M792.5,116.5 H798 L795.2,119.5 Z" fill="#555"/>
<!-- quick styles -->
<rect x="828.5" y="64.5" width="25" height="25" rx="5" fill="none" stroke="#C0C0C0" stroke-width="1.1"/>
<path d="M857.5,71.5 L852,77 L848,81.5 Q846,80 843.5,82 Q841,85 836.5,92 Q842,91 846,88.5 Q848,86.5 847.5,84.5 L852,80.5 L857.5,75 Z" fill="#BDBDBD"/>
<path d="M840.5,117 H846 L843.2,120 Z" fill="#C6C6C6"/>
<!-- shape fill/outline/effects -->
<g fill="none" stroke="#B8B8B8" stroke-width="1">
 <path d="M874,70 L879.5,64.5 L885,70 L879.5,75.5 Z"/>
 <path d="M877,62 L879.5,64.5"/>
 <path d="M872,84.5 H880 M872,84.5 V95 H883 V90"/>
 <path d="M879,92 L885.5,85.5"/>
 <path d="M872,116 Q872,110 878,109.5 H885.5 V116 Q885,120 879,120 H874 Q872,119 872,116 Z"/>
</g>
<rect x="872" y="74.5" width="16" height="2" fill="#DADADA"/>
<path d="M884,68 Q886.5,71 885.5,73" stroke="#B8B8B8" fill="none" stroke-width="1.3"/>
<path d="M880,91.5 L886,85.5 L887.5,87 L881.5,93 L879.5,93.5 Z" fill="#B8B8B8"/>
<path d="M876,117 Q880,112 885.5,112 V116 Q885,120 879,120 Z" fill="#DADADA"/>
<g fill="#C6C6C6">
 <path d="M941.5,69.5 H946.5 L944,72.5 Z"/>
 <path d="M941.5,92 H946.5 L944,95 Z"/>
 <path d="M941.5,114.5 H946.5 L944,117.5 Z"/>
</g>

<!-- find -->
<circle cx="975.5" cy="67.8" r="3.8" fill="none" stroke="#4A78B8" stroke-width="1.6"/>
<path d="M972.7,70.8 L968,75" stroke="#4A78B8" stroke-width="2.3" stroke-linecap="round"/>
<!-- replace -->
<text x="965.8" y="92" font-size="10" fill="#555" font-family="Liberation Sans" letter-spacing="-0.4">a<tspan fill="#4A6A98">b</tspan></text>
<text x="970.6" y="99.4" font-size="10" fill="#555" font-family="Liberation Sans" letter-spacing="-0.4">a<tspan fill="#5A7AA8">c</tspan></text>
<path d="M967.2,94 V96.8 H969.3 M968.3,95.7 L969.5,96.8 L968.3,97.9" fill="none" stroke="#4A78B8" stroke-width="0.8"/>
<path d="M1018.5,92 H1024 L1021.2,95 Z" fill="#555"/>
<!-- select -->
<path d="M970.5,107.5 V119.5 L973.5,116.5 L976.2,121.5 L978,120.6 L975.5,115.8 H979 Z" fill="#FCFCFC" stroke="#555" stroke-width="1"/>
<path d="M1013,114.5 H1018.5 L1015.7,117.5 Z" fill="#555"/>
</svg>
<!-- ribbon labels -->
<div class="t" style="left:12px;top:97px;color:#444">粘贴</div>
<div class="t gl" style="left:15px;top:133px;font-size:12px">剪贴板</div>
<div class="t" style="left:102px;top:97px;color:#444">新建</div>
<div class="t" style="left:91px;top:111px;color:#444">幻灯片</div>
<div class="t" style="left:161px;top:64px;color:#444">版式</div>
<div class="t" style="left:161px;top:87px;color:#444">重置</div>
<div class="t" style="left:161px;top:110px;color:#444">节</div>
<div class="t gl" style="left:127px;top:133px">幻灯片</div>
<div class="t gl" style="left:299px;top:133px">字体</div>
<div class="t gl" style="left:510px;top:133px">段落</div>
<div class="t" style="left:782px;top:97px;color:#444">排列</div>
<div class="t" style="left:817px;top:97px;color:#A8A8A8">快速样式</div>
<div class="t" style="left:890px;top:64px;color:#A8A8A8">形状填充</div>
<div class="t" style="left:890px;top:87px;color:#A8A8A8">形状轮廓</div>
<div class="t" style="left:890px;top:109px;color:#A8A8A8">形状效果</div>
<div class="t gl" style="left:773px;top:133px">绘图</div>
<div class="t" style="left:985px;top:64px;color:#444">查找</div>
<div class="t" style="left:985px;top:87px;color:#444">替换</div>
<div class="t" style="left:985px;top:110px;color:#444">选择</div>
<div class="t gl" style="left:984px;top:133px">编辑</div>


<!-- left panel -->
<div class="a" style="left:179px;top:152px;width:1px;height:769px;background:#B4B4B4"></div>
<div class="a" style="left:182px;top:920px;width:927px;height:1px;background:#B4B4B4"></div>

<div class="tnum" style="top:165px">1</div>
<div class="thumb" style="top:168px"><div class="ttx" style="top:25px;left:1.5px">第一张</div></div>
<div class="tnum" style="top:257px">2</div>
<div class="thumb" style="top:260px"><div class="ttx" style="top:30px;left:-0.5px">第二张</div></div>
<div class="tnum" style="top:349px">3</div>
<div class="thumb" style="top:352px"><div class="ttx" style="top:30px;left:-1px">第三张</div></div>
<div class="tnum" style="top:441px">4</div>
<div class="thumb" style="top:444px"><div class="ttx" style="top:30px;left:-1px">第四张</div></div>
<div class="tnum" style="top:533px">5</div>
<div class="thumb" style="top:536px"><div class="ttx" style="top:22px;left:-2px">第五张</div></div>
<div class="tnum" style="top:625px;color:#C9532F">6</div>
<div class="a" style="left:25px;top:626px;width:133px;height:78px;border:3px solid #D6603F;background:#FBFBFB"></div>

<!-- slide -->
<div class="a" style="left:192px;top:281px;width:895px;height:505px;background:#FBFBFB;border:1px solid #C6C6C6"></div>

<!-- slide photos -->
<svg class="a" style="left:283px;top:326px" width="250" height="153"><use href="#p1"/></svg>
<svg class="a" style="left:636px;top:333px" width="250" height="168"><use href="#p2"/></svg>
<svg class="a" style="left:386px;top:553px" width="250" height="166"><use href="#p3"/></svg>
<svg class="a" style="left:689px;top:544px" width="220" height="165"><use href="#p4"/></svg>
<!-- thumb photos -->
<svg class="a" style="left:40.9px;top:635.4px" width="35.5" height="21.7" viewBox="0 0 250 153" preserveAspectRatio="none"><use href="#p1"/></svg>
<svg class="a" style="left:91px;top:636.4px" width="35.5" height="23.8" viewBox="0 0 250 168" preserveAspectRatio="none"><use href="#p2"/></svg>
<svg class="a" style="left:55.6px;top:667.3px" width="35.5" height="23.6" viewBox="0 0 250 166" preserveAspectRatio="none"><use href="#p3"/></svg>
<svg class="a" style="left:98.5px;top:666px" width="31.2" height="23.4" viewBox="0 0 220 165" preserveAspectRatio="none"><use href="#p4"/></svg>

<!-- scrollbar -->
<div class="a" style="left:1098px;top:167px;width:11px;height:568px;background:#D9D9D9"></div>

<div id="status" class="a"></div>
<div class="t" style="left:6px;top:927px;letter-spacing:0.28px">幻灯片 第 6 张，共 6 张</div>
<div class="t" style="left:188px;top:927px">中文(中国)</div>
<div class="t" style="left:646px;top:927px">备注</div>
<div class="t" style="left:707px;top:927px">批注</div>
<div class="a" style="left:750px;top:923px;width:38px;height:19px;background:#C6C6C6"></div>
<div class="t" style="left:1045px;top:927px;-webkit-text-stroke:0">70%</div>
<!-- scrollbar parts -->
<div class="a" style="left:1098px;top:152px;width:12px;height:15px;background:#FCFCFC;border:1px solid #8A8A8A"></div>
<div class="a" style="left:1098px;top:735px;width:12px;height:114px;background:#FCFCFC;border:1px solid #8A8A8A"></div>
<div class="a" style="left:1098px;top:849px;width:12px;height:15px;background:#FCFCFC;border:1px solid #C8C8C8;border-top:none"></div>
<svg class="a" style="left:1090px;top:150px" width="19" height="750">
 <path d="M12.5,11 L17,6.8 L21.5,11 Z" fill="#555"/>
 <path d="M12.5,705.5 H21.5 L17,709.5 Z" fill="#555"/>
 <path d="M12,723 L16.5,719 L21,723 Z M12,727 L16.5,723 L21,727 Z" fill="#666"/>
 <path d="M12,737 H21 L16.5,741 Z M12,741 H21 L16.5,745 Z" fill="#666"/>
</svg>
<svg class="a" style="left:0;top:923px" width="1109" height="19">
 <!-- spell book -->
 <g fill="none" stroke="#555" stroke-width="1">
  <path d="M156.5,5 Q159,4.5 162.5,6 V16 Q159,14.5 156.5,15 Z"/>
  <path d="M162.5,6 Q165,4.5 168,5 V8 M168,13.5 V15 Q165,14.5 162.5,16"/>
  <path d="M164.5,10.5 L166,12.3 L169.3,8.5" stroke-width="1.3"/>
 </g>
 <!-- notes -->
 <path d="M633.5,7 L635.7,4.8 L637.9,7 Z" fill="#555"/>
 <path d="M633.5,9.8 H640.6 M630.5,13 H640.6 M630.5,16.3 H637" stroke="#555" stroke-width="1"/>
 <!-- comment -->
 <path d="M691,5.5 H703 V13 H697 L694.5,16.5 V13 H691 Z" fill="#6E6E6E"/>
 <!-- normal view -->
 <g fill="none" stroke="#666" stroke-width="1.1">
  <rect x="762.5" y="4.8" width="13" height="11.5"/>
  <path d="M765.5,4.8 V16.3"/>
  <rect x="768.5" y="6.8" width="4.5" height="2.8"/>
  <path d="M765.5,13.5 H775.5"/>
 </g>
 <!-- sorter -->
 <g fill="none" stroke="#666" stroke-width="1.1">
  <rect x="800.3" y="5" width="5" height="4.2"/><rect x="808.5" y="5" width="5" height="4.2"/>
  <rect x="800.3" y="11.8" width="5" height="4.2"/><rect x="808.5" y="11.8" width="5" height="4.2"/>
 </g>
 <!-- reading -->
 <g fill="none" stroke="#666" stroke-width="1.1">
  <path d="M838,5 H844.5 V16.5 H838 Z M844.5,5 H851 V16.5 H844.5"/>
  <path d="M839.5,8 H843 M839.5,10.5 H843 M839.5,13 H843 M846,8 H849.5 M846,10.5 H849.5 M846,13 H849.5" stroke-width="0.9"/>
 </g>
 <!-- slideshow -->
 <rect x="876.3" y="4.5" width="12.7" height="1.8" fill="#666"/>
 <g fill="none" stroke="#666" stroke-width="1.1">
  <path d="M877.8,6 V11.5 H887.5 V6 M879.5,8.8 H886 M882.6,11.5 V15.5 M879.8,15.8 H885.5"/>
 </g>
 <!-- zoom -->
 <rect x="907" y="9.8" width="6" height="2" fill="#555"/>
 <rect x="917" y="10.3" width="100" height="1" fill="#A0A0A0"/>
 <rect x="967" y="7.5" width="1" height="6" fill="#A0A0A0"/>
 <rect x="950" y="5.3" width="4.2" height="11" fill="#555"/>
 <path d="M1021,10.8 H1029.2 M1025.1,6.8 V14.8" stroke="#555" stroke-width="2"/>
 <!-- fit -->
 <g fill="none" stroke="#555" stroke-width="1">
  <rect x="1083.5" y="5.5" width="12.5" height="12"/>
  <path d="M1089.7,7 V10 M1089.7,13 V16 M1085,11.5 H1088 M1091.5,11.5 H1094.5"/>
 </g>
 <path d="M1088.2,8.5 L1089.7,6.8 L1091.2,8.5 Z M1088.2,14.5 L1089.7,16.2 L1091.2,14.5 Z M1086.5,10 L1084.8,11.5 L1086.5,13 Z M1093,10 L1094.7,11.5 L1093,13 Z" fill="#555"/>
</svg>

</body></html>
